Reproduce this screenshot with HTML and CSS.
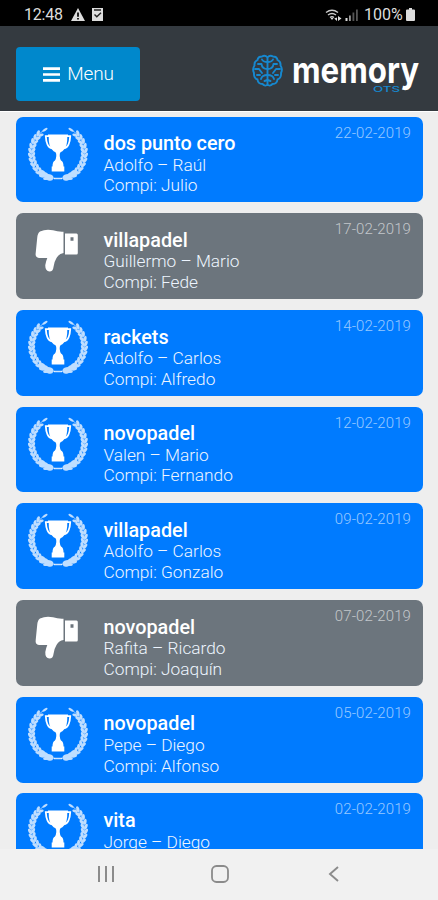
FILE: index.html
```
<!DOCTYPE html>
<html lang="es">
<head>
<meta charset="utf-8">
<title>Memory OTS</title>
<link rel="stylesheet" href="styles.css">
</head>
<body>
<svg width="0" height="0" class="defs">
  <defs>
    <g id="leaf"><ellipse cx="1.900" cy="26" rx="1.500" ry="3" transform="rotate(-24 1.900 26)"/><ellipse cx="5.300" cy="25.500" rx="1.500" ry="2.900" transform="rotate(28 5.300 25.500)"/></g>
    <g id="branch">
      <path d="M27 51.500Q3.500 48 3.500 26Q4 11 16 3" fill="none" stroke="currentColor" stroke-width=".8"/>
      <use href="#leaf" transform="rotate(-65 30 26)"/><use href="#leaf" transform="rotate(-55 30 26)"/>
      <use href="#leaf" transform="rotate(-45 30 26)"/><use href="#leaf" transform="rotate(-35 30 26)"/>
      <use href="#leaf" transform="rotate(-25 30 26)"/><use href="#leaf" transform="rotate(-15 30 26)"/>
      <use href="#leaf" transform="rotate(-5 30 26)"/><use href="#leaf" transform="rotate(5 30 26)"/>
      <use href="#leaf" transform="rotate(15 30 26)"/><use href="#leaf" transform="rotate(25 30 26)"/>
      <use href="#leaf" transform="rotate(35 30 26)"/><use href="#leaf" transform="rotate(45 30 26)"/>
      <ellipse cx="17" cy="2.800" rx="3" ry="1.100" transform="rotate(-32 17 2.800)"/>
      <ellipse cx="21" cy="50.300" rx="4.500" ry="3.200" transform="rotate(14 21 50.300)"/>
      <ellipse cx="14.500" cy="46.500" rx="4.500" ry="2.800" transform="rotate(30 14.500 46.500)"/>
    </g>
    <symbol id="win" viewBox="0 0 60 54">
      <g opacity=".75"><use href="#branch"/><use href="#branch" transform="matrix(-1 0 0 1 60 0)"/></g>
      <path d="M26 51.500h8" stroke="currentColor" stroke-width="1.500" opacity=".8"/>
      <path d="M21 9.200H17.800Q18 14 19.500 17.500Q20.500 20.500 24.500 21.500M39 9.200h3.200Q42 14 40.500 17.500Q39.500 20.500 35.500 21.500" fill="none" stroke="currentColor" stroke-width="1.800"/>
      <path d="M20 7.500h20v2h-.7Q39.500 19 36 22.500Q34.500 24.500 32.500 25.200Q31.500 26.500 31.700 29Q32 32 33 33.500Q35.500 34.500 35.500 39.500h.8v5H23.700v-5h.8Q24.500 34.500 27 33.500Q28 32 28.300 29Q28.500 26.500 27.500 25.200Q25.500 24.500 24 22.500Q20.500 19 20.700 9.500H20z"/>
    </symbol>
    <symbol id="lose" viewBox="0 0 60 54">
      <path d="M12 5.500Q18 2.700 25 4.300Q30 6 35.500 5.700V27Q31 27.500 28.500 32Q26 36 25.500 41Q25 45.500 21.500 45.500Q17 45 17.300 39Q18 35 19.300 32H11Q7 31.500 7.700 27L9.200 12Q9.500 7 12 5.500z"/>
      <path fill-rule="evenodd" d="M37 7.500H48.500Q49.800 7.500 49.800 9V27Q49.800 28.500 48.500 28.500H37zM42.500 11.300v3.400h3v-3.400z"/>
    </symbol>
  </defs>
</svg>
<div class="phone">
  <div class="status">
    <span class="clock">12:48</span>
    <svg class="warn" viewBox="0 0 14 13"><path fill="#ddd" d="M7 0l7 13H0z"/><path d="M7 4.500v4.200M7 10v1.500" stroke="#000" stroke-width="1.700"/></svg>
    <svg class="check" viewBox="0 0 11 13"><path fill="#ddd" d="M0 0h11v13H0z"/><path d="M2 2h7M2.500 6.500l2.300 2.300L9 4.700" fill="none" stroke="#222" stroke-width="1.400"/></svg>
    <svg class="signal" viewBox="0 0 34 14">
      <path d="M1 4.500Q7 0 13 4.500M3 7Q7 4 11 7M5 9.500Q7 7.800 9 9.500" fill="none" stroke="#ccc" stroke-width="1.400"/>
      <path fill="#ddd" d="M7 12l-1.500-2h3zM13 8l3.500 2.500-3.500 2.500zM12 13l-2.800-2.500 2.800-1zM20.500 10h2v3h-2z"/>
      <path fill="#999" d="M24 7.500h1.800v5.500h-1.800z"/><path fill="#555" d="M27.500 4.500h1.800v8.500h-1.800zM31 1.500h1.800v11.500h-1.800z"/>
    </svg>
    <span class="percent">100%</span>
    <svg class="battery" viewBox="0 0 9 13"><path fill="#ddd" d="M3 0h3v1.500h2q1 0 1 1V12q0 1-1 1H1q-1 0-1-1V2.500q0-1 1-1h2z"/></svg>
  </div>
  <header class="header">
    <button class="menu">
      <svg class="bars" viewBox="0 0 17 15"><path d="M0 1.700h17M0 7.500h17M0 13.300h17" stroke="#fff" stroke-width="2.700"/></svg>
      <span>Menu</span>
    </button>
    <svg class="logo" viewBox="0 0 168 48">
      <g fill="none" stroke="#1688cf" stroke-width="1.900" stroke-linejoin="round" stroke-linecap="round">
        <path d="M15.500 5.500Q13 2.500 10 4.500Q6 4.500 5.500 8Q2 9.500 2.500 13.500Q0 17 2 21Q1.500 26 5.500 27.500Q6 32 10.500 32Q13.500 35 15.500 32.500zM15.500 5.500Q18 2.500 21 4.500Q25 4.500 25.500 8Q29 9.500 28.500 13.500Q31 17 29 21Q29.500 26 25.500 27.500Q25 32 20.500 32Q17.500 35 15.500 32.500"/>
        <path d="M15.500 10Q11 10 10 7.500M15.500 17Q10 17 9.500 12H6M3 17h4l3 4M15.500 23Q10 23 9 27M5 23h3M15.500 28l-3 1M15.500 10Q20 10 21 7.500M15.500 17Q21 17 21.500 12H25M28 17h-4l-3 4M15.500 23Q21 23 22 27M26 23h-3M15.500 28l3 1"/>
      </g>
      <text class="word" x="40" y="30.500" textLength="127" lengthAdjust="spacingAndGlyphs">memory</text>
      <text class="ots" x="121" y="40" textLength="27" lengthAdjust="spacingAndGlyphs">OTS</text>
    </svg>
  </header>
  <main class="list">
    <article class="card"><svg class="icon"><use href="#win"/></svg><div class="info"><h2>dos punto cero</h2><p>Adolfo – Raúl</p><p>Compi: Julio</p></div><time>22-02-2019</time></article>
    <article class="card lost"><svg class="icon"><use href="#lose"/></svg><div class="info"><h2>villapadel</h2><p>Guillermo – Mario</p><p>Compi: Fede</p></div><time>17-02-2019</time></article>
    <article class="card"><svg class="icon"><use href="#win"/></svg><div class="info"><h2>rackets</h2><p>Adolfo – Carlos</p><p>Compi: Alfredo</p></div><time>14-02-2019</time></article>
    <article class="card"><svg class="icon"><use href="#win"/></svg><div class="info"><h2>novopadel</h2><p>Valen – Mario</p><p>Compi: Fernando</p></div><time>12-02-2019</time></article>
    <article class="card"><svg class="icon"><use href="#win"/></svg><div class="info"><h2>villapadel</h2><p>Adolfo – Carlos</p><p>Compi: Gonzalo</p></div><time>09-02-2019</time></article>
    <article class="card lost"><svg class="icon"><use href="#lose"/></svg><div class="info"><h2>novopadel</h2><p>Rafita – Ricardo</p><p>Compi: Joaquín</p></div><time>07-02-2019</time></article>
    <article class="card"><svg class="icon"><use href="#win"/></svg><div class="info"><h2>novopadel</h2><p>Pepe – Diego</p><p>Compi: Alfonso</p></div><time>05-02-2019</time></article>
    <article class="card"><svg class="icon"><use href="#win"/></svg><div class="info"><h2>vita</h2><p>Jorge – Diego</p></div><time>02-02-2019</time></article>
  </main>
  <nav class="nav">
    <svg viewBox="0 0 18 18"><path d="M2 1v16M9 1v16M16 1v16" stroke="#8b8b8b" stroke-width="2"/></svg>
    <svg viewBox="0 0 18 18"><rect x="1" y="1" width="16" height="16" rx="4.500" fill="none" stroke="#8b8b8b" stroke-width="1.800"/></svg>
    <svg viewBox="0 0 18 18"><path d="M13 2L5 9l8 7" fill="none" stroke="#8b8b8b" stroke-width="1.900"/></svg>
  </nav>
</div>
</body>
</html>
```
FILE: styles.css
```
* { box-sizing: border-box; }
body { margin: 0; font-family: Roboto, "Liberation Sans", sans-serif; }
.defs { display: block; height: 0; }
.phone { width: 438px; height: 900px; display: flex; flex-direction: column; overflow: hidden; background: #eee; }
.status { height: 26px; flex: none; background: #000; color: #ddd; display: flex; align-items: center; padding: 3px 23px 0 24px; font-size: 16px; }
.clock { width: 40px; letter-spacing: -.2px; }
.warn { width: 14px; height: 13px; margin-left: 7px; }
.check { width: 11px; height: 13px; margin-left: 7px; }
.signal { width: 34px; height: 14px; margin-left: auto; }
.percent { margin-left: 5px; width: 38px; white-space: nowrap; }
.battery { width: 9px; height: 13px; margin-left: 4px; }
.header { height: 85px; flex: none; background: #343a40; display: flex; align-items: flex-start; justify-content: space-between; padding: 21px 18px 0 16px; }
.menu { width: 124px; height: 54px; border: 0; border-radius: 4px; background: #08c; color: #fff; display: flex; align-items: center; justify-content: center; gap: 7px; padding: 0 2px 2px 0; font: 300 19px Roboto, sans-serif; }
.menu span { letter-spacing: -.1px; }
.bars { width: 17px; height: 15px; margin: 3px 0 0 3px; }
.logo { width: 168px; height: 48px; margin-top: 5px; overflow: visible; }
.word { font: 700 36px Inter, sans-serif; fill: #fff; }
.ots { font: 500 8px Inter, sans-serif; fill: #1688cf; }
.list { flex: 1; min-height: 0; overflow: hidden; border-top: 1px solid #fff; padding: 4.600px 15px 0 16px; display: flex; flex-direction: column; gap: 10.900px; }
.card { height: 85.800px; flex: none; border-radius: 7px; background: #007bff; color: #fff; display: flex; align-items: flex-start; padding: 11px 12px 0; }
.lost { background: #6c757d; }
.icon { width: 60px; height: 54px; flex: none; fill: currentColor; margin-top: -1px; }
.lost .icon { margin-top: 2px; }
.info { margin-left: 15.500px; padding-top: 5.600px; flex: 1; }
h2 { margin: 0; font-size: 19.800px; line-height: 22.400px; font-weight: 500; }
p { margin: 0; font-size: 17.300px; line-height: 20.700px; font-weight: 300; color: #eef5ff; }
h2 + p { margin-top: -.9px; }
time { font-size: 15px; line-height: 18px; margin-top: -4px; font-weight: 300; letter-spacing: .1px; color: rgba(255,255,255,.6); }
.nav { height: 51px; flex: none; background: #f1f1f1; display: flex; align-items: center; justify-content: space-between; padding: 0 95px 2px 97px; }
.nav svg { width: 18px; height: 18px; }
```
